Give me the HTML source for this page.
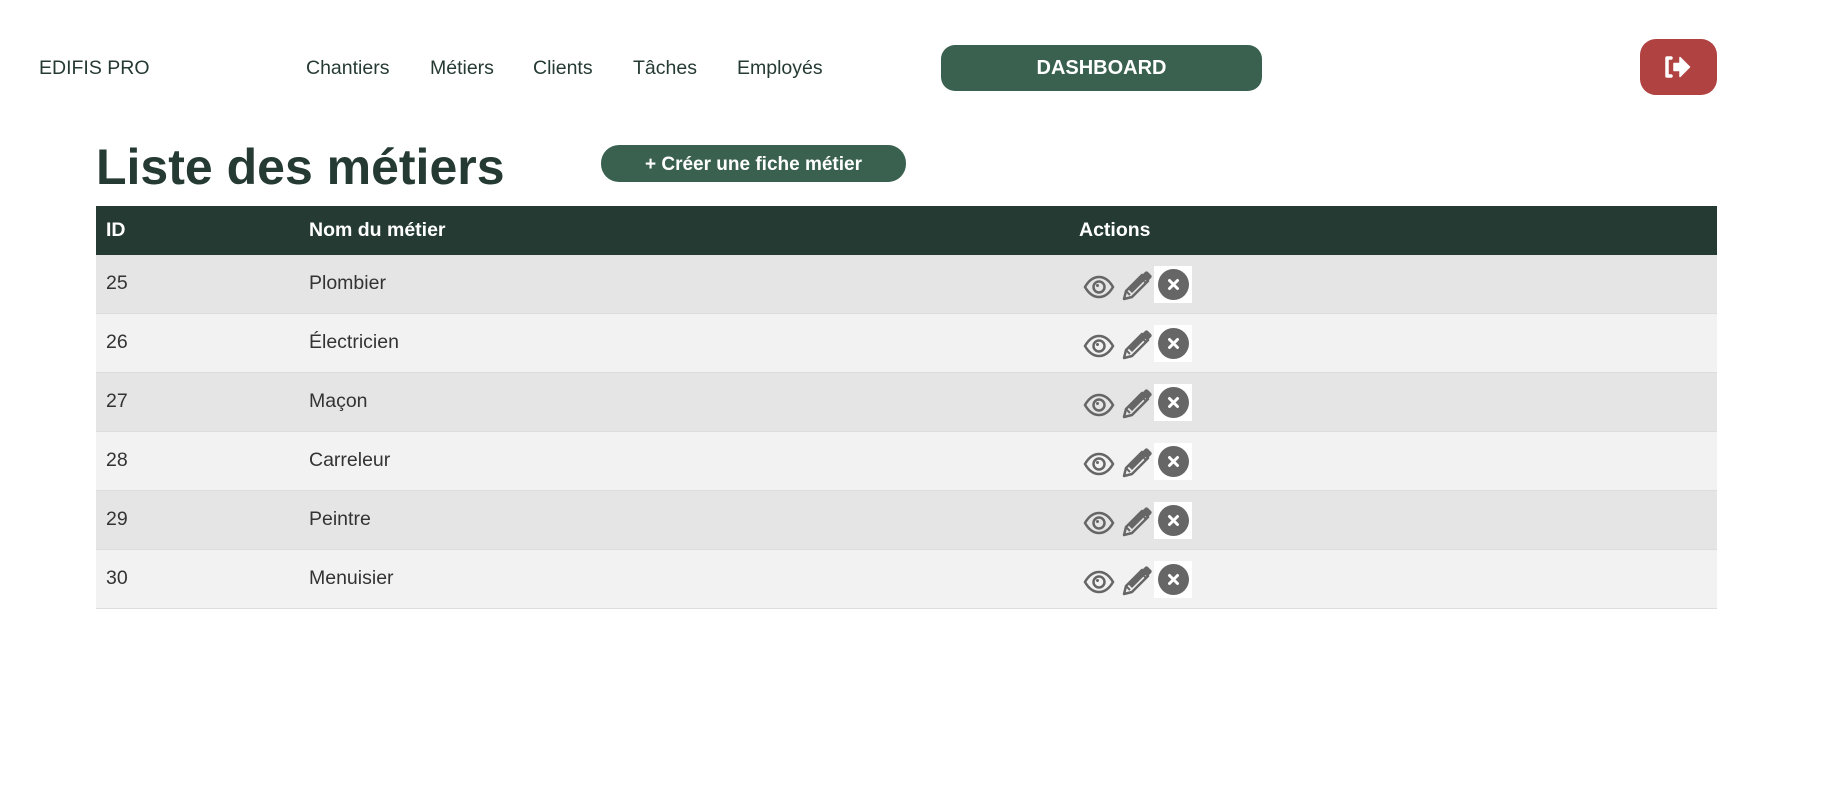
<!DOCTYPE html>
<html><head><meta charset="utf-8"><style>
body{margin:0;width:1837px;height:799px;background:#fff;font-family:"Liberation Sans",Arial,sans-serif;color:#253a33;position:relative;overflow:hidden}
.a{position:absolute}
.nav{font-size:19.5px;color:#253a33;top:57px}
.btn{background:#3a6150;color:#fff;font-weight:bold;display:flex;align-items:center;justify-content:center}
table{position:absolute;left:96px;top:206px;width:1621px;border-collapse:collapse;font-size:19.5px}
th{background:#243a32;color:#fff;text-align:left;height:49px;padding:0 0 0 10px;font-weight:bold}
td{height:58px;padding:0 0 0 10px;color:#333;vertical-align:top;border-bottom:1px solid #ddd}
td span{display:block;margin-top:17px}
tr:nth-child(even) td{background:#e5e5e5}
tr:nth-child(odd) td{background:#f2f2f2}
.ic{display:flex;align-items:center;margin-top:11px;margin-left:3px;gap:0}
</style></head><body>
<div class="a" style="left:39px;top:57px;font-size:19.5px">EDIFIS PRO</div>
<div class="a nav" style="left:306px">Chantiers</div>
<div class="a nav" style="left:430px">Métiers</div>
<div class="a nav" style="left:533px">Clients</div>
<div class="a nav" style="left:633px">Tâches</div>
<div class="a nav" style="left:737px">Employés</div>
<div class="a btn" style="left:941px;top:45px;width:321px;height:46px;border-radius:14px;font-size:20px">DASHBOARD</div>
<div class="a" style="left:1640px;top:39px;width:77px;height:56px;border-radius:16px;background:#b04242">
<svg width="77" height="56" viewBox="0 0 77 56"><path d="M31 19h-4v18h4" fill="none" stroke="#fff" stroke-width="3.5" stroke-linecap="round" stroke-linejoin="round"/><path d="M34 24.5h6v-6l9.5 9.5-9.5 9.5v-6h-6z" fill="#fff" stroke="#fff" stroke-width="1.5" stroke-linejoin="round"/></svg></div>
<div class="a" style="left:96px;top:138px;font-size:50px;font-weight:bold">Liste des métiers</div>
<div class="a btn" style="left:601px;top:147px;width:305px;height:37px;border-radius:18px;font-size:19px;top:145px;padding-top:3px;box-sizing:border-box">+ Créer une fiche métier</div>
<table>
<tr><th style="width:193px">ID</th><th style="width:760px">Nom du métier</th><th>Actions</th></tr>
<tr><td><span>25</span></td><td><span>Plombier</span></td><td><div class="ic"></div></td></tr>
<tr><td><span>26</span></td><td><span>Électricien</span></td><td><div class="ic"></div></td></tr>
<tr><td><span>27</span></td><td><span>Maçon</span></td><td><div class="ic"></div></td></tr>
<tr><td><span>28</span></td><td><span>Carreleur</span></td><td><div class="ic"></div></td></tr>
<tr><td><span>29</span></td><td><span>Peintre</span></td><td><div class="ic"></div></td></tr>
<tr><td><span>30</span></td><td><span>Menuisier</span></td><td><div class="ic"></div></td></tr>
</table>
<script>
var ic='<svg width="34" height="30" viewBox="0 0 34 30"><path d="M3 17c4-7 9-10 14-10s10 3 14 10c-4 7-9 10-14 10S7 24 3 17z" fill="none" stroke="#666" stroke-width="2.5"/><circle cx="17" cy="17" r="5.5" fill="none" stroke="#666" stroke-width="2.5"/><circle cx="15.5" cy="15.5" r="1.5" fill="#666"/></svg>'+
'<svg width="38" height="36" viewBox="0 0 38 36"><path d="M8 32l2-8 16-16 6 6-16 16z" fill="none" stroke="#666" stroke-width="2.5" stroke-linejoin="round"/><path d="M24 10l6 6M10 24l4 4" stroke="#666" stroke-width="2"/><path d="M26 8l3-3a2 2 0 0 1 3 0l3 3a2 2 0 0 1 0 3l-3 3z" fill="#666"/><path d="M12 22l14-14 4 4-14 14z" fill="#666"/></svg>'+
'<div style="width:38px;height:37px;background:#fff;display:flex;align-items:center;justify-content:center"><svg width="31" height="31" viewBox="0 0 31 31"><circle cx="15.5" cy="15.5" r="15.5" fill="#666"/><path d="M11.5 11.5l8 8M19.5 11.5l-8 8" stroke="#fff" stroke-width="3" stroke-linecap="round"/></svg></div>';
document.querySelectorAll('.ic').forEach(function(e){e.innerHTML=ic});
</script>
</body></html>
